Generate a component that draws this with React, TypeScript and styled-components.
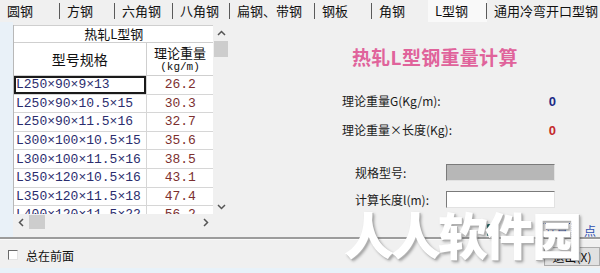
import styled, { createGlobalStyle } from 'styled-components'

const GlobalStyle = createGlobalStyle`
  html, body {
    margin: 0;
    padding: 0;
    background: #f0f0f0;
  }
  body {
    font-family: "Noto Sans CJK SC", "Liberation Sans", sans-serif;
    color: #111;
  }
`

const TABS = [
  { label: '圆钢', width: 60 },
  { label: '方钢', width: 55 },
  { label: '六角钢', width: 58 },
  { label: '八角钢', width: 57 },
  { label: '扁钢、带钢', width: 85 },
  { label: '钢板', width: 57 },
  { label: '角钢', width: 56, noSep: true },
  { label: 'L型钢', width: 59, active: true },
  { label: '通用冷弯开口型钢', width: 113, noSep: true },
]

const ROWS = [
  ['L250×90×9×13', '26.2'],
  ['L250×90×10.5×15', '30.3'],
  ['L250×90×11.5×16', '32.7'],
  ['L300×100×10.5×15', '35.6'],
  ['L300×100×11.5×16', '38.5'],
  ['L350×120×10.5×16', '43.1'],
  ['L350×120×11.5×18', '47.4'],
  ['L400×120×11.5×22', '56.2'],
]

const Caret = ({ dir }: { dir: 'up' | 'down' | 'left' | 'right' }) => {
  const pts = {
    up: '1,6 4.5,2.5 8,6',
    down: '1,3 4.5,6.5 8,3',
    left: '6,1 2.5,4.5 6,8',
    right: '3,1 6.5,4.5 3,8',
  }[dir]
  return (
    <svg width="9" height="9" viewBox="0 0 9 9">
      <polyline points={pts} fill="none" stroke="#555" strokeWidth="1.5" />
    </svg>
  )
}

const App = () => {
  return (
    <Window>
      <GlobalStyle />
      <TabBar>
        {TABS.map((t) => (
          <Tab key={t.label} $width={t.width} $active={!!t.active} $sep={!t.noSep}>
            {t.label}
          </Tab>
        ))}
      </TabBar>

      <Body>
        <LeftStrip />
        <GridArea>
          <TableViewport>
            <Table>
              <colgroup>
                <col style={{ width: 132 }} />
                <col style={{ width: 68 }} />
              </colgroup>
              <thead>
                <tr>
                  <TitleCell colSpan={2}>热轧L型钢</TitleCell>
                </tr>
                <tr>
                  <HeadCell>型号规格</HeadCell>
                  <HeadCell>
                    理论重量
                    <Unit>(kg/m)</Unit>
                  </HeadCell>
                </tr>
              </thead>
              <tbody>
                {ROWS.map(([spec, weight], i) => (
                  <tr key={spec}>
                    <SpecCell $focused={i === 0}>{spec}</SpecCell>
                    <WeightCell>{weight}</WeightCell>
                  </tr>
                ))}
              </tbody>
            </Table>
          </TableViewport>

          <VScroll>
            <ArrowBox>
              <Caret dir="up" />
            </ArrowBox>
            <VThumb />
            <VTrack />
            <ArrowBox>
              <Caret dir="down" />
            </ArrowBox>
          </VScroll>

          <HScroll>
            <ArrowBox>
              <Caret dir="left" />
            </ArrowBox>
            <HThumb />
            <HTrack />
            <ArrowBox>
              <Caret dir="right" />
            </ArrowBox>
          </HScroll>
        </GridArea>

        <RightPanel>
          <Heading>热轧L型钢重量计算</Heading>

          <ResultRow $gap={27}>
            <Label>理论重量G(Kg/m):</Label>
            <ResultValue $color="#1c2a85">0</ResultValue>
          </ResultRow>
          <ResultRow $gap={13}>
            <Label>理论重量×长度(Kg):</Label>
            <ResultValue $color="#c42a2a">0</ResultValue>
          </ResultRow>

          <InputRow $gap={26}>
            <Label>规格型号:</Label>
            <Field $disabled />
          </InputRow>
          <InputRow $gap={10}>
            <Label>计算长度l(m):</Label>
            <Field />
          </InputRow>

          <ActionRow>
            <SmallIcon />
            <FocusBox>计算</FocusBox>
            <LinkText>点</LinkText>
          </ActionRow>
        </RightPanel>
      </Body>

      <Divider />

      <Footer>
        <CheckLine>
          <CheckBox />
          总在前面
        </CheckLine>
        <CloseButton>退出(X)</CloseButton>
      </Footer>
      <BottomStrip />

      <Watermark>人人软件园</Watermark>
    </Window>
  )
}

export default App

const Window = styled.div`
  position: relative;
  width: 600px;
  height: 273px;
  overflow: hidden;
  background: #f0f0f0;
  display: flex;
  flex-direction: column;
`

const TabBar = styled.div`
  display: flex;
  height: 22px;
  flex-shrink: 0;
`

const Tab = styled.div<{ $width: number; $active: boolean; $sep: boolean }>`
  position: relative;
  box-sizing: border-box;
  width: ${({ $width }) => $width}px;
  flex-shrink: 0;
  padding-left: 7px;
  font-size: 13px;
  line-height: 22px;
  white-space: nowrap;
  overflow: hidden;
  color: #111;
  background: ${({ $active }) => ($active ? '#f9f9f9' : 'transparent')};

  &::after {
    content: '';
    display: ${({ $sep }) => ($sep ? 'block' : 'none')};
    position: absolute;
    right: 0;
    top: 3px;
    width: 1px;
    height: 16px;
    background: #5a5a5a;
  }
`

const Body = styled.div`
  display: flex;
  height: 215px;
  flex-shrink: 0;
`

const LeftStrip = styled.div`
  width: 13px;
  flex-shrink: 0;
  background: #e9f1f8;
`

const GridArea = styled.div`
  display: grid;
  grid-template-columns: 200px 16px;
  grid-template-rows: 189px 16px;
  padding-top: 3px;
  width: 216px;
  flex-shrink: 0;
`

const TableViewport = styled.div`
  overflow: hidden;
  background: #fff;
  border-left: 1px solid #b8b8b8;
  box-sizing: border-box;
`

const Table = styled.table`
  width: 200px;
  table-layout: fixed;
  border-collapse: collapse;
  background: #fff;
`

const TitleCell = styled.th`
  height: 16px;
  padding: 0;
  font-size: 13px;
  font-weight: normal;
  line-height: 16px;
  text-align: center;
  color: #111;
  border: 1px solid #cfcfcf;
  border-left: none;
`

const HeadCell = styled.th`
  height: 32px;
  padding: 0;
  font-size: 14px;
  font-weight: normal;
  line-height: 16px;
  text-align: center;
  color: #111;
  border: 1px solid #cfcfcf;
  border-left: none;

  & + & {
    font-size: 13px;
  }
`

const Unit = styled.div`
  font-family: "Liberation Mono", monospace;
  font-size: 11px;
  line-height: 13px;
`

const SpecCell = styled.td<{ $focused: boolean }>`
  height: 17.6px;
  padding: 0 0 0 2px;
  font-family: "Liberation Mono", "Noto Sans CJK SC", monospace;
  font-size: 13px;
  line-height: 17px;
  color: #2b2d6e;
  white-space: nowrap;
  overflow: hidden;
  border-bottom: 1px solid #d6d6d6;
  border-right: 1px solid #d6d6d6;
  box-shadow: ${({ $focused }) => ($focused ? 'inset 0 0 0 2px #1a1a1a' : 'none')};
`

const WeightCell = styled.td`
  height: 17.6px;
  padding: 0;
  font-family: "Liberation Mono", monospace;
  font-size: 13px;
  line-height: 17px;
  text-align: center;
  color: #7c2f2f;
  border-bottom: 1px solid #d6d6d6;
`

const VScroll = styled.div`
  display: flex;
  flex-direction: column;
  background: #f0f0f0;
`

const HScroll = styled.div`
  display: flex;
  background: #f0f0f0;
`

const ArrowBox = styled.div`
  width: 16px;
  height: 16px;
  flex-shrink: 0;
  display: flex;
  align-items: center;
  justify-content: center;
`

const VThumb = styled.div`
  height: 16px;
  margin: 0 1px;
  background: #cdcdcd;
  flex-shrink: 0;
`

const VTrack = styled.div`
  flex: 1;
`

const HThumb = styled.div`
  width: 16px;
  margin: 1px 0;
  background: #cdcdcd;
  flex-shrink: 0;
`

const HTrack = styled.div`
  flex: 1;
`

const RightPanel = styled.div`
  flex: 1;
  display: flex;
  flex-direction: column;
  padding-left: 113px;
  padding-right: 40px;
`

const Heading = styled.div`
  margin: 25px 0 0 10px;
  font-size: 19px;
  font-weight: 700;
  line-height: 19px;
  letter-spacing: 0.3px;
  color: #e0639b;
`

const ResultRow = styled.div<{ $gap: number }>`
  display: flex;
  justify-content: space-between;
  align-items: center;
  height: 16px;
  margin-top: ${({ $gap }) => $gap}px;
`

const Label = styled.span`
  font-size: 12px;
  line-height: 16px;
  color: #1a1a1a;
  white-space: nowrap;
`

const ResultValue = styled.span<{ $color: string }>`
  font-family: "Liberation Sans", sans-serif;
  font-size: 13px;
  font-weight: 700;
  color: ${({ $color }) => $color};
  margin-right: 4px;
`

const InputRow = styled.div<{ $gap: number }>`
  display: flex;
  justify-content: space-between;
  align-items: center;
  padding-left: 13px;
  margin-top: ${({ $gap }) => $gap}px;
  height: 17px;
`

const Field = styled.div<{ $disabled?: boolean }>`
  box-sizing: border-box;
  width: 109px;
  height: 17px;
  margin-right: 5px;
  background: ${({ $disabled }) => ($disabled ? '#b7b7b7' : '#fff')};
  border-top: 1px solid #7a7a7a;
  border-left: 1px solid #7a7a7a;
  border-right: 1px solid #e2e2e2;
  border-bottom: 1px solid #e2e2e2;
`

const ActionRow = styled.div`
  display: flex;
  align-items: center;
  margin-top: 15px;
  margin-left: 145px;
  margin-right: -40px;
  height: 14px;
  gap: 6px;
`

const SmallIcon = styled.span`
  width: 8px;
  height: 12px;
  background: #2d6b6b;
  border-radius: 1px;
`

const FocusBox = styled.span`
  margin-left: 40px;
  width: 29px;
  height: 12px;
  border: 1px dotted #3b55a0;
  font-size: 11px;
  line-height: 12px;
  color: #3b55a0;
  text-align: center;
`

const LinkText = styled.span`
  margin-left: 6px;
  font-size: 12px;
  color: #2d4fb0;
`

const Divider = styled.div`
  height: 2px;
  flex-shrink: 0;
  background: #9c9c9c;
  border-bottom: 1px solid #fafafa;
`

const Footer = styled.div`
  display: flex;
  align-items: center;
  justify-content: space-between;
  height: 28px;
  flex-shrink: 0;
  padding-left: 8px;
`

const CheckLine = styled.label`
  display: flex;
  align-items: center;
  gap: 8px;
  font-size: 12px;
  color: #111;
  margin-top: 2px;
`

const CheckBox = styled.span`
  box-sizing: border-box;
  width: 10px;
  height: 10px;
  background: #fff;
  border-top: 1px solid #6a6a6a;
  border-left: 1px solid #6a6a6a;
  border-right: 1px solid #e4e4e4;
  border-bottom: 1px solid #e4e4e4;
`

const CloseButton = styled.div`
  box-sizing: border-box;
  width: 56px;
  height: 19px;
  margin-top: 4px;
  border: 1px solid #adadad;
  background: #e1e1e1;
  font-size: 12px;
  line-height: 17px;
  text-align: center;
  color: #111;
`

const BottomStrip = styled.div`
  flex: 1;
  background: #e8f2f9;
`

const Watermark = styled.div`
  position: absolute;
  left: 344px;
  top: 208px;
  font-size: 50px;
  font-weight: 900;
  line-height: 50px;
  letter-spacing: -3px;
  color: #ffffff;
  text-shadow: 1px 1px 0 #b0b0b0, 2px 2px 3px rgba(0, 0, 0, 0.35);
  white-space: nowrap;
  pointer-events: none;
`
